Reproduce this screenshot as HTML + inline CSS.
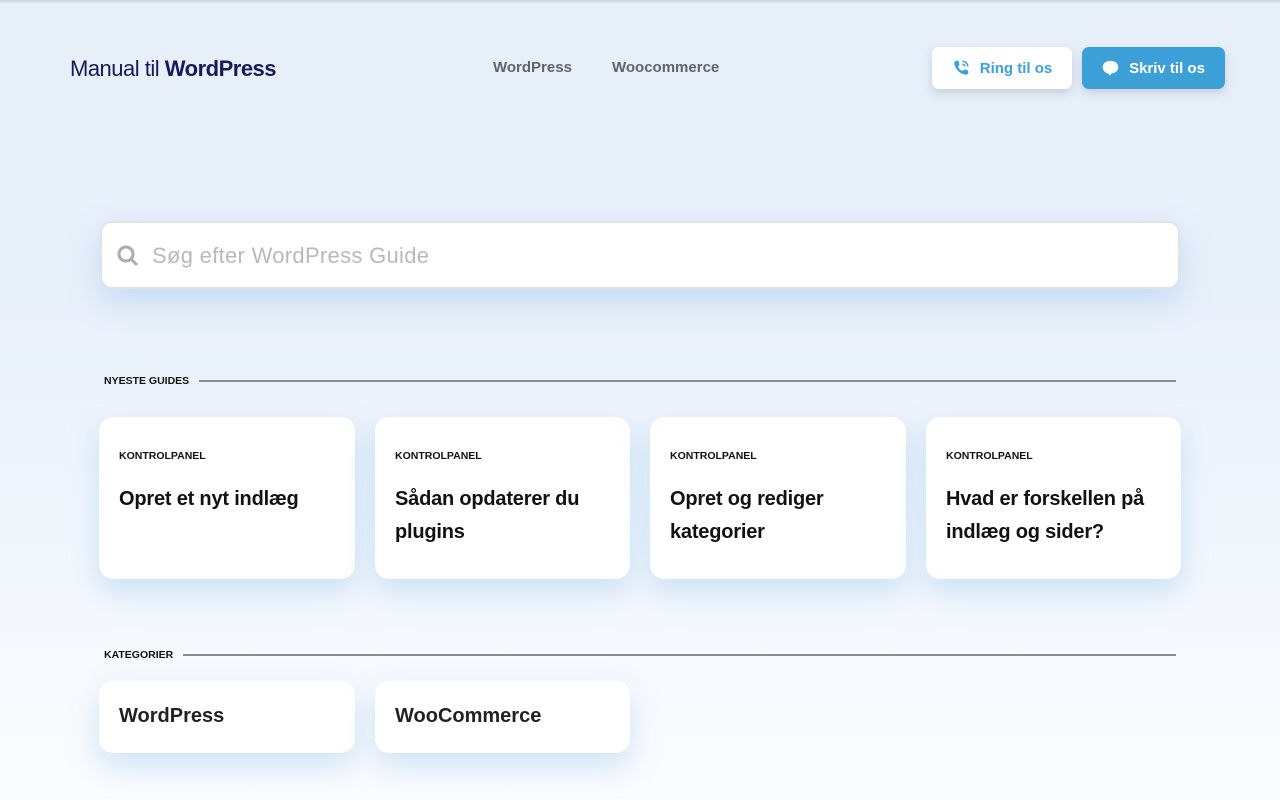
<!DOCTYPE html>
<html><head><meta charset="utf-8"><style>
*{box-sizing:border-box;margin:0;padding:0}
body{width:1280px;height:800px;overflow:hidden;font-family:"Liberation Sans",sans-serif;background:linear-gradient(#e7eff9 0,#e8f0fa 300px,#f2f7fd 560px,#fbfcfe 800px);position:relative}
.topsh{position:absolute;left:0;top:0;width:1280px;height:4px;background:linear-gradient(rgba(0,0,0,.12),rgba(0,0,0,0))}
.logo{position:absolute;left:70px;top:56px;font-size:22px;color:#141a5a;letter-spacing:-.5px}
.logo b{font-weight:700}
.nav{position:absolute;top:59px;font-size:15px;font-weight:700;color:#5e6470}
.btn{position:absolute;top:47px;height:42px;border-radius:7px;font-size:15px;font-weight:700;display:flex;align-items:center;justify-content:center;gap:10px;box-shadow:0 4px 10px rgba(40,60,100,.18)}
.b1{left:932px;width:140px;background:#fff;color:#3d9fd8}
.b2{left:1082px;width:143px;background:#3d9fd8;color:#fff}
.search{position:absolute;left:100px;top:221px;width:1080px;height:68px;background:#fff;border:2px solid #e1e3e8;border-radius:12px;box-shadow:0 12px 30px rgba(130,180,225,.35)}
.search span{position:absolute;left:50px;top:20px;font-size:22px;color:#b7b9bd;letter-spacing:.3px}
.sec{position:absolute;left:104px;font-size:10.5px;font-weight:700;color:#111;display:flex;align-items:center;width:1072px}
.sec i{flex:1;height:2px;background:#8a8c90;margin-left:10px}
.card{position:absolute;background:#fff;border-radius:14px;box-shadow:0 14px 30px rgba(130,185,230,.35);padding:0 20px}
.card .k{font-size:10.5px;font-weight:700;color:#111;margin-top:33px}
.card .t{font-size:20px;font-weight:700;color:#111;line-height:33px;margin-top:21px;letter-spacing:-.2px}
.c2{font-size:20px;font-weight:700;color:#222;padding-top:24px}
</style></head><body>
<div class="topsh"></div>
<div class="logo">Manual til <b>WordPress</b></div>
<div class="nav" style="left:493px">WordPress</div>
<div class="nav" style="left:612px">Woocommerce</div>
<div class="btn b1"><svg width="18" height="18" viewBox="0 0 24 24" fill="#3d9fd8"><path d="M6 2l3 1 1 5-2 2c1 3 3 5 6 6l2-2 5 1 1 3-2 3C11 21 3 13 3 4z"/><path d="M14 3a7 7 0 0 1 7 7M14 7a3 3 0 0 1 3 3" stroke="#3d9fd8" stroke-width="2" fill="none"/></svg>Ring til os</div>
<div class="btn b2"><svg width="17" height="16" viewBox="0 0 24 22" fill="#fff"><path d="M12 1C5 1 1 5 1 10s4 8 8 9l2 3 2-3c6-1 10-4 10-9S19 1 12 1z"/></svg>Skriv til os</div>
<div class="search"><svg style="position:absolute;left:14px;top:21px" width="24" height="24" viewBox="0 0 24 24" fill="none" stroke="#a9abae" stroke-width="3"><circle cx="10" cy="10" r="7"/><path d="M15 15l6 6"/></svg><span>Søg efter WordPress Guide</span></div>
<div class="sec" style="top:375px">NYESTE GUIDES<i></i></div>
<div class="card" style="left:99px;top:417px;width:256px;height:162px"><div class="k">KONTROLPANEL</div><div class="t">Opret et nyt indlæg</div></div>
<div class="card" style="left:375px;top:417px;width:255px;height:162px"><div class="k">KONTROLPANEL</div><div class="t">Sådan opdaterer du plugins</div></div>
<div class="card" style="left:650px;top:417px;width:256px;height:162px"><div class="k">KONTROLPANEL</div><div class="t">Opret og rediger kategorier</div></div>
<div class="card" style="left:926px;top:417px;width:255px;height:162px"><div class="k">KONTROLPANEL</div><div class="t">Hvad er forskellen på indlæg og sider?</div></div>
<div class="sec" style="top:649px">KATEGORIER<i></i></div>
<div class="card c2" style="left:99px;top:681px;width:256px;height:72px">WordPress</div>
<div class="card c2" style="left:375px;top:681px;width:255px;height:72px">WooCommerce</div>
</body></html>
